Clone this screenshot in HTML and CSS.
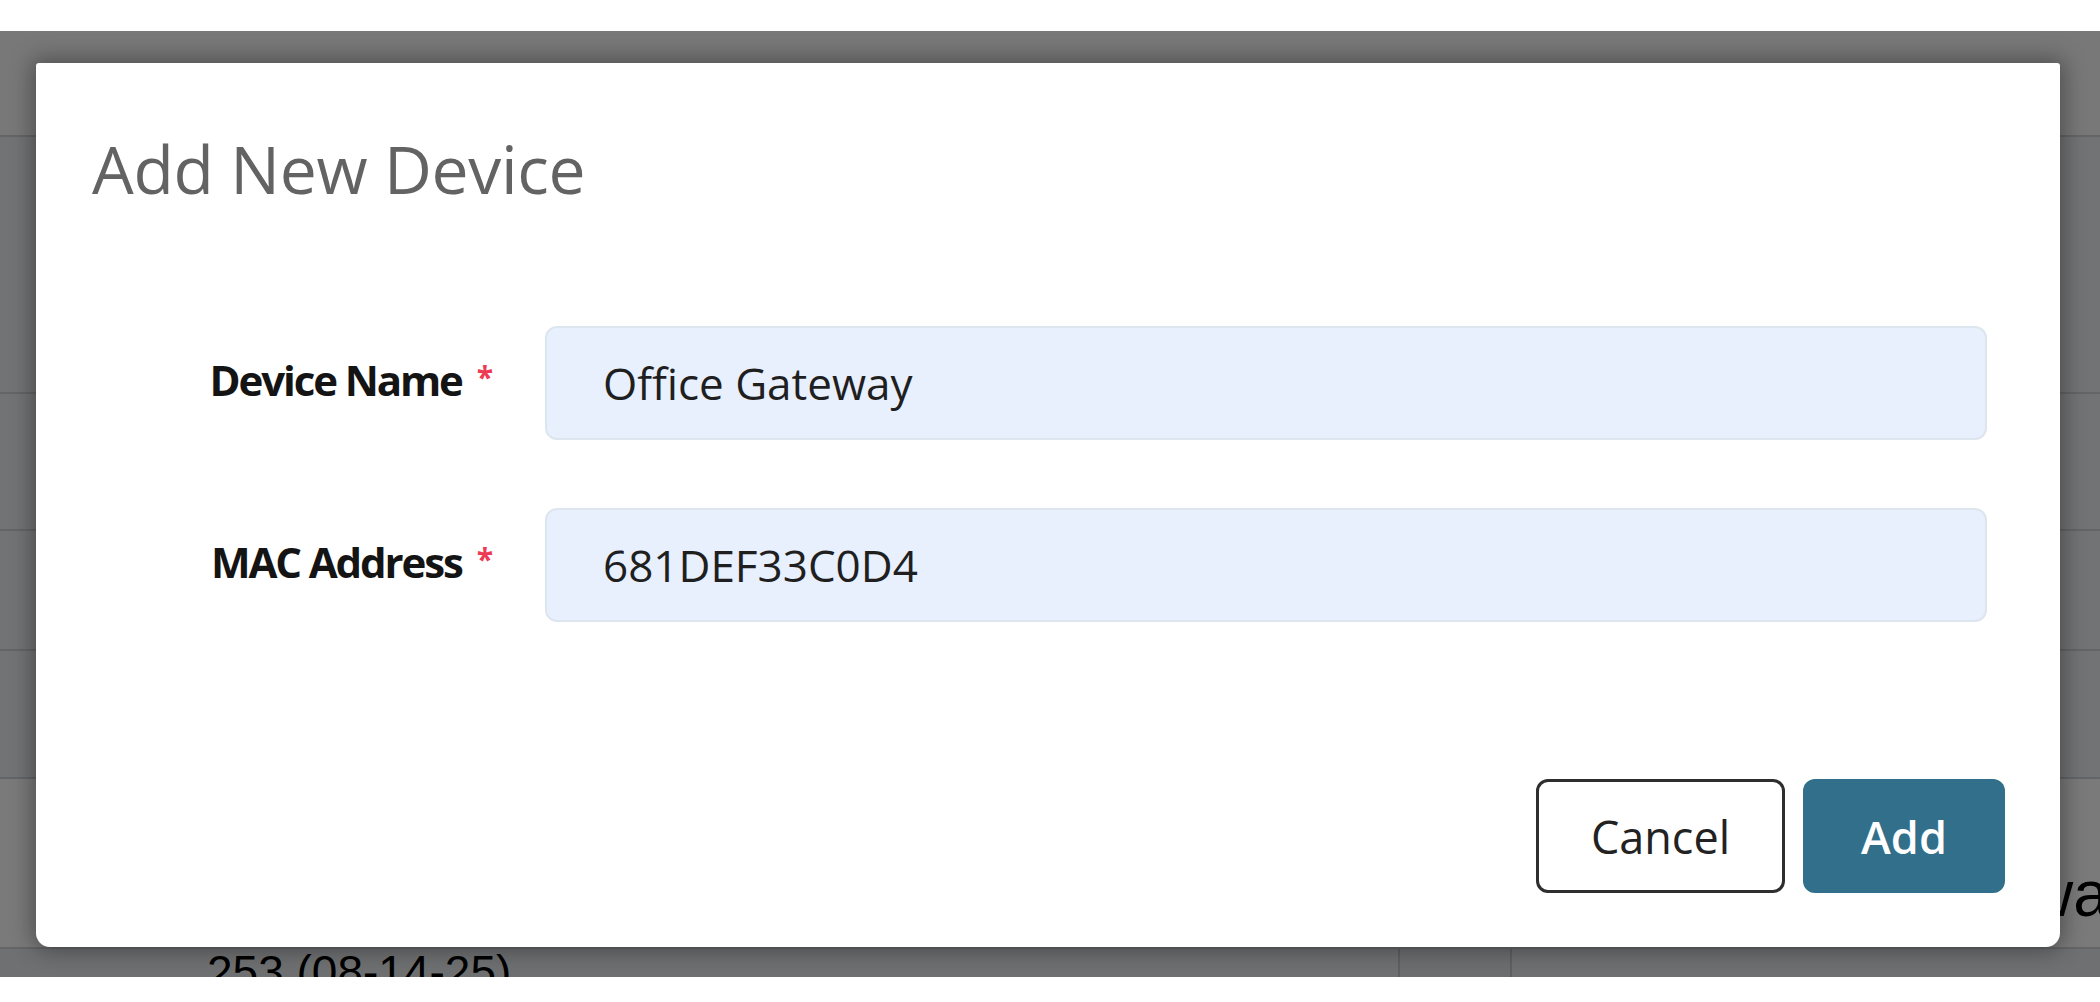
FILE: index.html
```html
<!DOCTYPE html>
<html lang="en">
<head>
    <meta charset="UTF-8">
    <meta name="viewport" content="width=device-width, initial-scale=1.0">
    <title>Devices</title>
    <link rel="stylesheet" href="styles.css">
</head>
<body>
    <div class="screen">
        <!-- Page behind the dialog -->
        <div class="page">
            <div class="page-head"></div>
            <div class="table">
                <div class="row row-a"></div>
                <div class="row row-b"></div>
                <div class="row row-c"></div>
                <div class="row row-d"></div>
                <div class="row row-e">
                    <div class="cell cell-id"></div>
                    <div class="cell cell-mid"></div>
                    <div class="cell cell-act"></div>
                    <div class="cell cell-name">way</div>
                </div>
                <div class="row row-f">
                    <div class="cell cell-id">253 (08-14-25)</div>
                    <div class="cell cell-mid"></div>
                    <div class="cell cell-act"></div>
                    <div class="cell cell-name"></div>
                </div>
            </div>
        </div>

        <!-- Dialog -->
        <div class="overlay">
            <div class="modal">
                <h2 class="modal-title">Add New Device</h2>
                <form class="device-form">
                    <label class="field-label" for="deviceName">Device Name <span class="req">*</span></label>
                    <input class="field-input" id="deviceName" type="text" value="Office Gateway">

                    <label class="field-label" for="macAddress">MAC Address <span class="req">*</span></label>
                    <input class="field-input" id="macAddress" type="text" value="681DEF33C0D4">
                </form>
                <div class="modal-footer">
                    <button class="btn btn-cancel" type="button">Cancel</button>
                    <button class="btn btn-primary" type="button">Add</button>
                </div>
            </div>
        </div>
    </div>
</body>
</html>
```

FILE: styles.css
```css
body {
    margin: 0;
    padding: 0;
    background: #fff;
    font-family: "Open Sans", "Noto Sans", sans-serif;
}

.screen {
    position: relative;
    margin-top: 31px;
    height: 946px;
    overflow: hidden;
}

/* Page behind */
.page {
    background: #fafafa;
    height: 100%;
}

.page-head {
    height: 104px;
    background: #fafafa;
}

.table {
    background: #eef0f3;
    border-top: 2px solid #d0d3d8;
}

.row {
    display: flex;
    border-bottom: 2px solid #d0d3d8;
    box-sizing: border-box;
}

.row-a { height: 257px; }
.row-b { height: 137px; }
.row-c { height: 120px; }
.row-d { height: 128px; }
.row-e { height: 170px; background: #fff; }
.row-f { height: 140px; background: #e9ebee; }

.cell {
    flex-shrink: 0;
    box-sizing: border-box;
    font-family: "Liberation Sans", Arial, sans-serif;
    color: #000;
}

.cell-id {
    width: 1398px;
    padding: 0 0 0 207px;
    font-size: 46px;
    line-height: 1;
}

.cell-mid {
    width: 114px;
    border-left: 2px solid #c6c9ce;
    border-right: 2px solid #c6c9ce;
    background: #e4e7eb;
}

.cell-act {
    width: 515px;
}

.cell-name {
    flex: 1 1 0;
    min-width: 0;
    font-size: 64px;
    padding-top: 78px;
    white-space: nowrap;
}

/* Dialog */
.overlay {
    position: absolute;
    inset: 0;
    display: flex;
    padding: 32px 40px 30px 36px;
    box-sizing: border-box;
    background: rgba(0, 0, 0, 0.52);
}

.modal {
    flex: 1;
    display: flex;
    flex-direction: column;
    box-sizing: border-box;
    padding: 0 55px 54px 56px;
    background: #fff;
    border-radius: 3px 3px 14px 14px;
    box-shadow: 0 0 22px 4px rgba(0, 0, 0, 0.35);
}

.modal-title {
    margin: 0;
    padding-top: 65px;
    font-size: 66px;
    line-height: 80px;
    font-weight: 400;
    letter-spacing: -0.005em;
    color: #636363;
}

.device-form {
    display: grid;
    grid-template-columns: 401px 1442px;
    column-gap: 52px;
    row-gap: 68px;
    align-items: center;
    margin-top: 118px;
}

.field-label {
    text-align: right;
    padding-bottom: 8px;
    font-size: 42px;
    font-weight: 700;
    letter-spacing: -0.05em;
    color: #141414;
}

.req {
    display: inline-block;
    margin-left: 6px;
    vertical-align: 8px;
    font-size: 30px;
    font-weight: 700;
    letter-spacing: 0;
    color: #ee3b55;
}

.field-input {
    height: 114px;
    box-sizing: border-box;
    padding: 0 0 0 56px;
    border: 2px solid #dde5ee;
    border-radius: 12px;
    background: #e8f0fe;
    font-family: "Open Sans", "Noto Sans", sans-serif;
    font-size: 44px;
    color: #1f1f1f;
    outline: none;
}

.modal-footer {
    margin-top: auto;
    display: flex;
    justify-content: flex-end;
    gap: 18px;
}

.btn {
    height: 114px;
    box-sizing: border-box;
    border-radius: 12px;
    font-family: "Open Sans", "Noto Sans", sans-serif;
    font-size: 45px;
    cursor: pointer;
}

.btn-cancel {
    width: 249px;
    border: 3px solid #2e2e2e;
    background: #fff;
    color: #222;
}

.btn-primary {
    width: 202px;
    border: none;
    background: #316f8b;
    color: #fff;
    font-weight: 600;
}
```
